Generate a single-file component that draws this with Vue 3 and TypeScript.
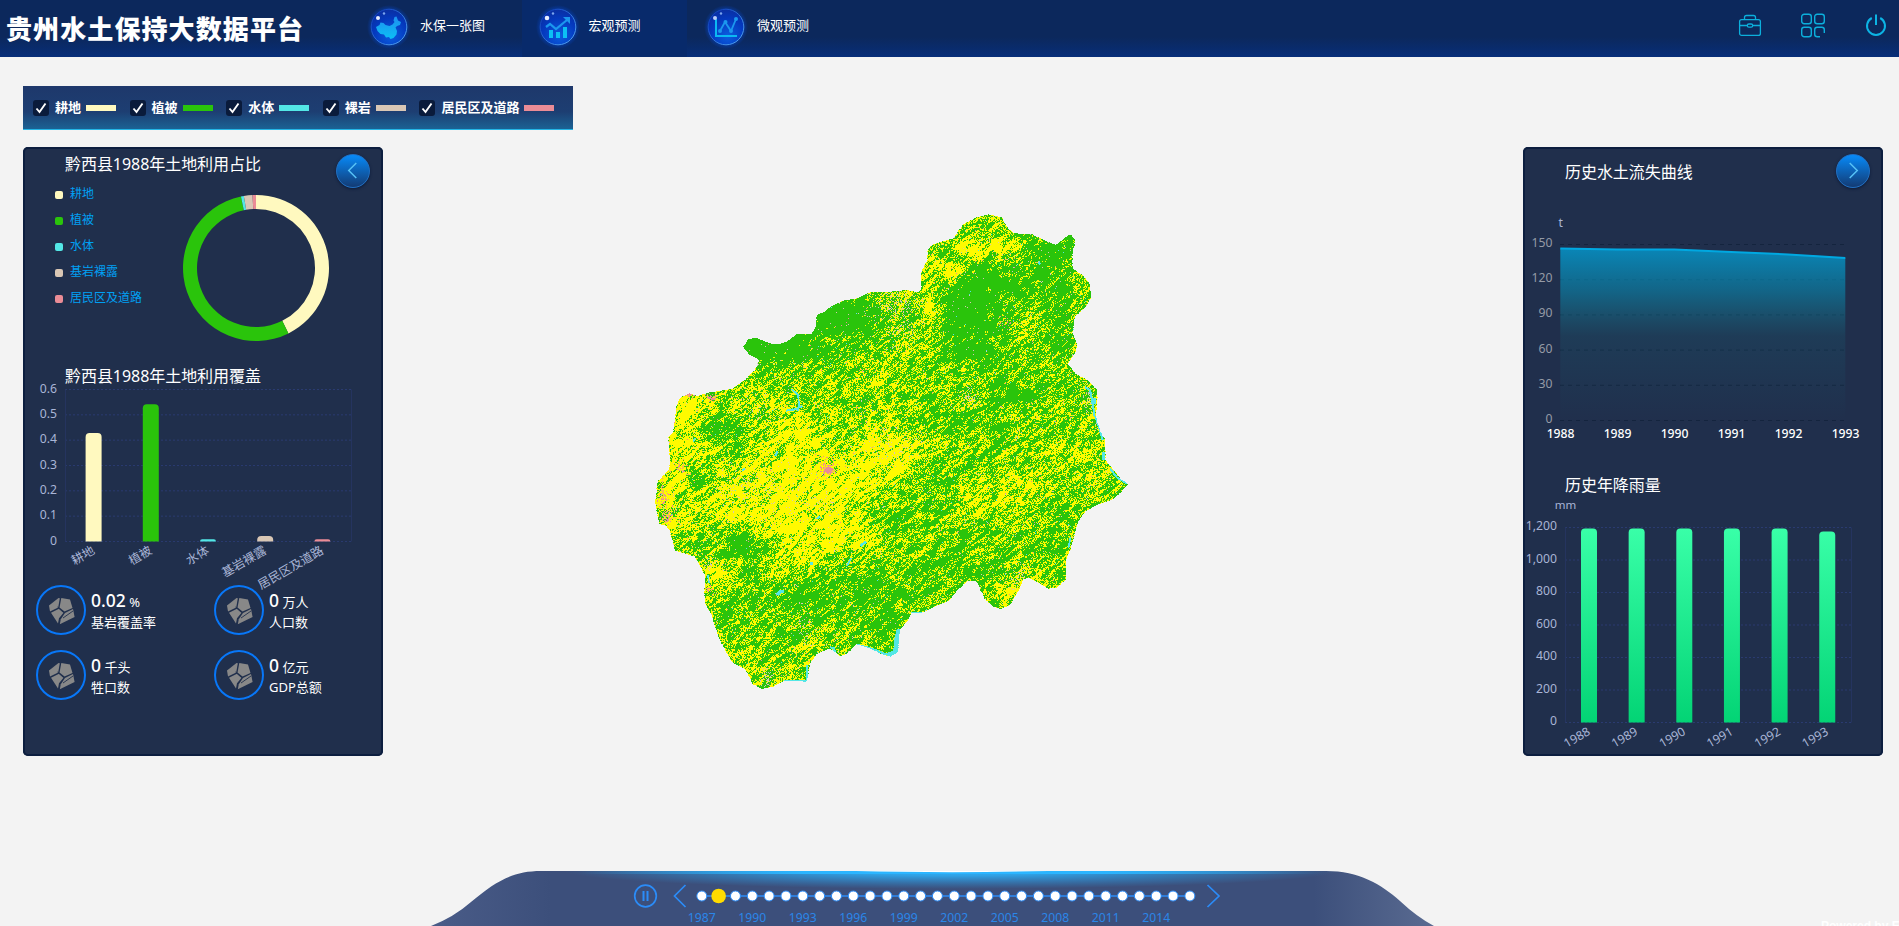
<script setup lang="ts">
import { onMounted, ref } from 'vue'

type Point = [number, number]
type Blob = [number, number, number, number, number]

const layers = [
  { name: '耕地', color: '#fff9bf' },
  { name: '植被', color: '#2ac40b' },
  { name: '水体', color: '#53e7e6' },
  { name: '裸岩', color: '#d9c7b5' },
  { name: '居民区及道路', color: '#ea8c96' }
]

const shares = [
  { name: '耕地', color: '#fff9bf', from: 0, to: 153.6, value: 0.428 },
  { name: '植被', color: '#2ac40b', from: 153.6, to: 348.1, value: 0.541 },
  { name: '水体', color: '#53e7e6', from: 348.1, to: 350.4, value: 0.008 },
  { name: '基岩裸露', color: '#d9c7b5', from: 350.4, to: 357.3, value: 0.022 },
  { name: '居民区及道路', color: '#ea8c96', from: 357.3, to: 360, value: 0.008 }
]

function arc(from: number, to: number): string {
  const p = (deg: number, r: number) => {
    const a = ((deg - 90) * Math.PI) / 180
    return `${(75 + r * Math.cos(a)).toFixed(2)} ${(75 + r * Math.sin(a)).toFixed(2)}`
  }
  const large = to - from > 180 ? 1 : 0
  return `M${p(from, 73)}A73 73 0 ${large} 1 ${p(to, 73)}L${p(to, 59)}A59 59 0 ${large} 0 ${p(from, 59)}Z`
}

function bar(cx: number, top: number, bottom: number): string {
  const r = Math.min(4, bottom - top)
  return `M${cx - 8} ${bottom}V${top + r}Q${cx - 8} ${top} ${cx - 8 + r} ${top}H${cx + 8 - r}Q${cx + 8} ${top} ${cx + 8} ${top + r}V${bottom}Z`
}

const coverBars = shares.map((s, i) => ({
  ...s,
  cx: 70.6 + i * 57.2,
  d: bar(70.6 + i * 57.2, Math.min(168.5 - s.value * 253.5, 166.3), 168.5)
}))
const coverTicks = [0.6, 0.5, 0.4, 0.3, 0.2, 0.1, 0]

const stats = [
  { value: '0.02', unit: '%', label: '基岩覆盖率' },
  { value: '0', unit: '万人', label: '人口数' },
  { value: '0', unit: '千头', label: '牲口数' },
  { value: '0', unit: '亿元', label: 'GDP总额' }
]

const lossTicks = [150, 120, 90, 60, 30, 0]
const lossYears = [1988, 1989, 1990, 1991, 1992, 1993]
const lossY = [28.5, 29.6, 29.6, 32, 34.4, 38]
const lossLine = lossY.map((y, i) => `${37.3 + i * 57},${y}`).join(' ')

const rainTicks = ['1,200', '1,000', '800', '600', '400', '200', '0']
const rainBars = lossYears.map((year, i) => ({
  year,
  cx: 66 + i * 47.65,
  d: bar(66 + i * 47.65, i === 5 ? 36.5 : 33.5, 227.5)
}))

const dots = Array.from({ length: 30 }, (_, i) => ({
  x: 270.8 + i * 16.83,
  year: 1987 + i,
  labelled: i % 3 === 0 && i < 28,
  active: i === 1
}))

const outline: Point[] = [
  [1045, 43], [1085, 52], [1105, 85], [1120, 100], [1175, 102], [1215, 122], [1248, 135], [1290, 102], [1307, 120],
  [1297, 160], [1298, 205], [1330, 228], [1348, 250], [1354, 290], [1340, 318], [1305, 350], [1298, 400], [1312, 435],
  [1305, 460], [1284, 492], [1305, 520], [1345, 542], [1373, 572], [1368, 650], [1380, 690], [1395, 720], [1397, 780],
  [1425, 815], [1440, 835], [1465, 852], [1445, 875], [1415, 900], [1370, 915], [1335, 935], [1315, 965], [1305, 1000],
  [1290, 1050], [1278, 1080], [1278, 1138], [1250, 1163], [1225, 1166], [1190, 1145], [1165, 1133], [1150, 1138],
  [1140, 1165], [1110, 1215], [1083, 1227], [1060, 1220], [1035, 1198], [1010, 1145], [985, 1142], [950, 1172],
  [930, 1200], [880, 1222], [845, 1238], [815, 1240], [800, 1265], [780, 1290], [773, 1358], [750, 1370], [725, 1362],
  [690, 1345], [650, 1333], [620, 1362], [600, 1368], [570, 1345], [530, 1362], [510, 1390], [500, 1445], [432, 1442],
  [400, 1460], [365, 1467], [338, 1452], [318, 1410], [275, 1385], [255, 1350], [235, 1310], [215, 1245], [195, 1210],
  [193, 1180], [195, 1125], [165, 1070], [105, 1052], [90, 995], [80, 978], [58, 972], [46, 910], [52, 845], [88, 808],
  [90, 770], [84, 712], [100, 695], [110, 615], [122, 592], [150, 580], [172, 588], [210, 577], [275, 567], [315, 540],
  [345, 510], [358, 480], [325, 462], [310, 440], [325, 418], [348, 413], [390, 430], [415, 433], [440, 425], [470, 403],
  [515, 403], [527, 380], [530, 345], [555, 335], [575, 318], [610, 302], [650, 295], [690, 277], [750, 275], [800, 270],
  [835, 277], [845, 265], [842, 220], [862, 180], [863, 150], [875, 135], [915, 122], [940, 115], [970, 72], [1010, 52]
]

// Farmland density: x, y, x radius, y radius, weight
const farmland: Blob[] = [
  [440, 850, 210, 130, 0.3], [620, 860, 130, 90, 0.2], [750, 760, 90, 75, 0.34], [130, 720, 55, 130, 0.3],
  [90, 900, 60, 110, 0.25], [560, 1010, 200, 55, 0.22], [340, 940, 130, 60, 0.2], [470, 690, 120, 60, 0.18],
  [940, 215, 38, 30, 0.5], [1000, 150, 60, 28, 0.4], [868, 320, 26, 60, 0.4], [1080, 130, 50, 40, 0.2],
  [1110, 890, 100, 70, 0.18], [775, 300, 50, 35, 0.2], [780, 460, 110, 80, 0.06], [220, 1110, 60, 35, 0.26],
  [1150, 450, 50, 70, 0.18], [150, 620, 35, 40, 0.35], [1110, 1180, 45, 40, 0.26], [350, 600, 90, 50, 0.12],
  [1320, 790, 70, 100, 0.1], [420, 1080, 80, 50, 0.18], [890, 180, 40, 60, 0.12], [1000, 890, 70, 60, 0.1],
  [970, 310, 90, 100, -0.42], [1080, 240, 110, 60, -0.28], [1250, 190, 60, 100, -0.36], [1260, 400, 50, 70, -0.26],
  [580, 350, 120, 60, -0.5], [430, 450, 150, 48, -0.42], [350, 430, 60, 35, -0.45], [1040, 440, 110, 80, -0.2],
  [1130, 580, 100, 35, -0.28], [310, 1035, 85, 40, -0.42], [470, 1190, 80, 45, -0.26], [700, 1170, 140, 50, -0.2],
  [880, 1085, 120, 50, -0.13], [860, 840, 70, 60, -0.14], [230, 680, 80, 35, -0.22], [770, 960, 80, 60, -0.2],
  [1000, 680, 110, 60, -0.12], [740, 1270, 50, 40, -0.2], [160, 830, 28, 28, -0.45], [1000, 1000, 90, 60, -0.1],
  [290, 750, 25, 60, -0.26], [1010, 1110, 40, 40, -0.2], [930, 155, 30, 20, -0.4], [120, 890, 20, 30, -0.3],
  [1200, 1000, 120, 90, -0.04], [520, 1230, 140, 70, -0.08], [690, 330, 70, 35, -0.15], [310, 1110, 60, 25, -0.2]
]
const bareRock: Blob[] = [
  [770, 310, 50, 40, 0.22], [780, 400, 50, 30, 0.12], [330, 850, 80, 50, 0.09], [520, 910, 60, 40, 0.06],
  [990, 590, 20, 22, 0.3], [210, 1090, 18, 14, 0.3], [380, 1430, 18, 26, 0.3], [1340, 600, 25, 30, 0.18],
  [490, 1290, 18, 50, 0.12], [740, 740, 90, 60, 0.05], [1140, 1140, 35, 40, 0.12], [350, 630, 60, 30, 0.1]
]
const builtUp: Blob[] = [
  [565, 810, 14, 12, 1.4], [550, 800, 28, 25, 0.18], [70, 890, 14, 35, 0.35], [80, 950, 20, 16, 0.5],
  [120, 805, 25, 18, 0.2], [215, 592, 14, 8, 0.8], [148, 582, 12, 6, 1], [1095, 365, 22, 14, 0.2], [205, 1170, 12, 10, 0.4]
]
const rivers: { width: number; points: Point[] }[] = [
  { width: 6, points: [[1335, 562], [1350, 570], [1356, 600], [1364, 650]] },
  { width: 16, points: [[1360, 595], [1361, 612]] },
  { width: 6, points: [[1366, 650], [1380, 690], [1388, 720]] },
  { width: 9, points: [[1389, 755], [1391, 780]] },
  { width: 6, points: [[1410, 805], [1430, 832], [1460, 850]] },
  { width: 9, points: [[850, 1240], [812, 1241]] },
  { width: 15, points: [[778, 1288], [770, 1320], [767, 1358], [742, 1366]] },
  { width: 7, points: [[740, 1364], [700, 1348], [650, 1334]] },
  { width: 6, points: [[500, 1395], [500, 1443], [432, 1443]] },
  { width: 5, points: [[455, 567], [474, 585], [478, 622]] },
  { width: 6, points: [[438, 632], [465, 628], [488, 618]] },
  { width: 10, points: [[470, 628], [476, 628]] },
  { width: 11, points: [[412, 1186], [420, 1175], [432, 1174]] },
  { width: 8, points: [[662, 1038], [678, 1024]] },
  { width: 5, points: [[620, 1098], [634, 1074]] },
  { width: 8, points: [[511, 1090], [519, 1090]] },
  { width: 6, points: [[1196, 185], [1200, 194]] },
  { width: 6, points: [[529, 957], [540, 950]] },
  { width: 6, points: [[308, 812], [314, 804]] },
  { width: 6, points: [[406, 768], [413, 754]] },
  { width: 5, points: [[160, 725], [165, 714]] },
  { width: 5, points: [[204, 1125], [207, 1150]] },
  { width: 5, points: [[1292, 1010], [1285, 1045]] },
  { width: 6, points: [[570, 1342], [582, 1345], [585, 1358]] }
]

function hash(x: number, y: number, seed: number): number {
  let h = Math.imul(x, 374761393) ^ Math.imul(y, 668265263) ^ Math.imul(seed, 1274126177)
  h = Math.imul(h ^ (h >>> 13), 1274126177)
  h = Math.imul(h ^ (h >>> 16), 2246822519)
  return ((h ^ (h >>> 15)) >>> 0) / 4294967296
}

function valueNoise(x: number, y: number, seed: number): number {
  const x0 = Math.floor(x)
  const y0 = Math.floor(y)
  const fx = x - x0
  const fy = y - y0
  const sx = fx * fx * (3 - 2 * fx)
  const sy = fy * fy * (3 - 2 * fy)
  const top = hash(x0, y0, seed) * (1 - sx) + hash(x0 + 1, y0, seed) * sx
  const low = hash(x0, y0 + 1, seed) * (1 - sx) + hash(x0 + 1, y0 + 1, seed) * sx
  return top * (1 - sy) + low * sy
}

function field(blobs: Blob[], x: number, y: number): number {
  let sum = 0
  for (const [cx, cy, rx, ry, w] of blobs) {
    const d = ((x - cx) / rx) ** 2 + ((y - cy) / ry) ** 2
    if (d < 7) sum += w * Math.exp(-d)
  }
  return sum
}

const mapCanvas = ref<HTMLCanvasElement | null>(null)

onMounted(() => {
  const ctx = mapCanvas.value?.getContext('2d')
  if (!ctx) return
  const region = new Path2D()
  outline.forEach(([x, y], i) => (i ? region.lineTo(x / 3, y / 3) : region.moveTo(x / 3, y / 3)))
  region.closePath()
  const river = rivers.map(({ width, points }) => {
    const path = new Path2D()
    points.forEach(([x, y], i) => (i ? path.lineTo(x / 3, y / 3) : path.moveTo(x / 3, y / 3)))
    return { width: width / 3, path }
  })
  for (let py = 10; py < 492; py++) {
    for (let px = 12; px < 492; px++) {
      const jx = px + 0.5 + (hash(px, py, 7) - 0.5) * 0.8
      if (!ctx.isPointInPath(region, jx, py + 0.5)) continue
      const x = px * 3
      const y = py * 3
      const along = px * 0.77 - py * 0.64
      const across = px * 0.64 + py * 0.77
      const density =
        0.432 +
        field(farmland, x, y) +
        (valueNoise(along / 7, across / 2, 1) - 0.5) * 0.66 +
        (valueNoise(along / 20, across / 6, 2) - 0.5) * 0.18 +
        (hash(px, py, 3) - 0.5) * 0.58
      let color = density > 0.5 ? '#fffa00' : '#2ac40b'
      if (hash(px, py, 4) < 0.01 + field(bareRock, x, y)) color = '#d9c7b5'
      if (hash(px, py, 5) < 0.002 + field(builtUp, x, y)) color = '#ea8c96'
      if (hash(px, py, 6) < 0.0015) color = '#53e7e6'
      for (const r of river) {
        ctx.lineWidth = r.width
        if (ctx.isPointInStroke(r.path, px + 0.5, py + 0.5)) color = '#53e7e6'
      }
      ctx.fillStyle = color
      ctx.fillRect(px, py, 1, 1)
    }
  }
})
</script>

<template>
  <div class="page">
    <header class="topbar">
      <h1 class="brand">贵州水土保持大数据平台</h1>
      <nav class="nav">
        <a class="nav-item">
          <svg class="orb" viewBox="0 0 44 44">
            <defs>
              <radialGradient id="orb" cx=".55" cy=".75" r=".75">
                <stop offset="0" stop-color="#0b5ddf" /><stop offset=".65" stop-color="#0438bd" /><stop offset="1" stop-color="#0a2fa2" />
              </radialGradient>
              <radialGradient id="halo"><stop offset=".72" stop-color="#0644c4" stop-opacity=".7" /><stop offset="1" stop-color="#0644c4" stop-opacity="0" /></radialGradient>
              <linearGradient id="rim" x2="1" y2="1"><stop offset=".1" stop-color="#0d3cba" /><stop offset="1" stop-color="#58aff8" /></linearGradient>
              <linearGradient id="land" x2="0" y2="1"><stop offset="0" stop-color="#1e8ff0" /><stop offset="1" stop-color="#0cc0f4" /></linearGradient>
            </defs>
            <circle cx="22" cy="22" r="22" fill="url(#halo)" /><circle cx="22" cy="22" r="17.8" fill="url(#orb)" stroke="url(#rim)" />
            <path d="M9 22l3.500-2 1-2.500 3 .5 2 2 4 1 3-1.500 2-2.500-1-1.500 1-3.500 2-.5 1.500 4 3 1.500-1 3-3 1-1.500 1.500 1.500 3.500-.5 3.500-3 3.500-3 1-1.500-2-3 .5-2-3-3.500-.5-3-3z" fill="url(#land)" />
            <circle cx="11" cy="13" r="2" fill="#e6eeff" /><circle cx="17" cy="8.500" r="1.200" fill="#7da5ef" />
          </svg>
          <span>水保一张图</span>
        </a>
        <a class="nav-item active">
          <svg class="orb" viewBox="0 0 44 44">
            <circle cx="22" cy="22" r="22" fill="url(#halo)" /><circle cx="22" cy="22" r="17.8" fill="url(#orb)" stroke="url(#rim)" />
            <path d="M13 25h4v8h-4zM20 27h4v6h-4zM27 22h4v11h-4z" fill="#0cc0f4" />
            <path d="M10 22l4-3 6 5 11-9" fill="none" stroke="#1c97ee" stroke-width="2.200" /><path d="M27 12h7v7z" fill="#1c97ee" />
            <circle cx="11" cy="13" r="2.300" fill="#e6eeff" /><circle cx="17" cy="8.500" r="1.200" fill="#7da5ef" />
          </svg>
          <span>宏观预测</span>
        </a>
        <a class="nav-item">
          <svg class="orb" viewBox="0 0 44 44">
            <circle cx="22" cy="22" r="22" fill="url(#halo)" /><circle cx="22" cy="22" r="17.8" fill="url(#orb)" stroke="url(#rim)" />
            <path d="M12 14v17h21" fill="none" stroke="#0cb8f2" stroke-width="2" />
            <path d="M16 26l5-9 6 9 5-12" fill="none" stroke="#1c97ee" stroke-width="1.800" />
            <g fill="#1c97ee"><circle cx="16" cy="26" r="2" /><circle cx="21.500" cy="17" r="2" /><circle cx="27" cy="26" r="2" /><circle cx="32" cy="14" r="2" /></g>
            <circle cx="11" cy="13" r="2" fill="#b9cdf8" /><circle cx="17" cy="8.500" r="1.200" fill="#7da5ef" />
          </svg>
          <span>微观预测</span>
        </a>
      </nav>
      <div class="tools">
        <svg width="24" height="24" viewBox="0 0 24 24" fill="none" stroke="#0cafdc" stroke-width="1.300">
          <rect x="1.600" y="6.600" width="20.800" height="15.800" rx="2" /><path d="M6.500 6.500V4.500Q6.500 2.500 8.500 2.500h7Q17.500 2.500 17.500 4.500v2M2 12.500h7.500M14.500 12.500H22" />
          <rect x="9.300" y="11" width="5.400" height="3.200" rx="1.600" />
        </svg>
        <svg width="26" height="26" viewBox="0 0 26 26" fill="none" stroke="#0cafdc" stroke-width="1.400">
          <rect x="1.700" y="1.200" width="9.600" height="9.600" rx="2.500" /><rect x="14.700" y="1.200" width="9.600" height="9.600" rx="2.500" />
          <rect x="1.700" y="14.200" width="9.600" height="9.600" rx="2.500" /><path d="M24.300 20v-3.300q0-2.500-2.500-2.500h-4.600q-2.500 0-2.500 2.500v4.600q0 2.500 2.500 2.500H20" />
        </svg>
        <svg width="24" height="24" viewBox="0 0 24 24" fill="none" stroke="#0cb4e4" stroke-width="2">
          <path d="M7.800 5A9 9 0 1 0 16.200 5M12 1.500v10.500" />
        </svg>
      </div>
    </header>

    <div class="layer-bar">
      <label v-for="layer in layers" :key="layer.name" class="layer">
        <span class="check"><svg viewBox="0 0 16 16"><path d="M3.500 8.500L6.500 12 12.500 3.500" fill="none" stroke="#fff" stroke-width="1.900" /></svg></span>
        <b>{{ layer.name }}</b>
        <i class="swatch" :style="{ background: layer.color }"></i>
      </label>
    </div>

    <main class="content">
      <section class="panel">
        <button class="toggle"><svg viewBox="0 0 34 34"><path d="M20.500 8.500L12.500 16.500 20.500 24.500" /></svg></button>
        <h2 class="title share-title">黔西县1988年土地利用占比</h2>
        <div class="share">
          <ul class="share-legend">
            <li v-for="s in shares" :key="s.name"><i :style="{ background: s.color }"></i>{{ s.name }}</li>
          </ul>
          <svg class="donut" viewBox="0 0 150 150">
            <path v-for="s in shares" :key="s.name" :d="arc(s.from, s.to)" :fill="s.color" />
          </svg>
        </div>
        <h2 class="title cover-title">黔西县1988年土地利用覆盖</h2>
        <svg class="chart cover-chart" viewBox="0 4 360 222">
          <g class="grid-lines">
            <line v-for="(t, i) in coverTicks" :key="t" x1="42" x2="328" :y1="16.500 + i * 25.330" :y2="16.500 + i * 25.330" />
            <path d="M42.500 16.500V168.500M328.500 16.500V168.500" class="frame" />
          </g>
          <text v-for="(t, i) in coverTicks" :key="'t' + t" class="tick" x="34" :y="19.700 + i * 25.330">{{ t }}</text>
          <path v-for="b in coverBars" :key="b.name" :d="b.d" :fill="b.color" />
          <text v-for="b in coverBars" :key="'n' + b.name" class="tick" :transform="`translate(${b.cx + 2} 180) rotate(-30)`">{{ b.name }}</text>
        </svg>
        <div class="stats">
          <div v-for="s in stats" :key="s.label" class="stat">
            <svg class="stone" viewBox="0 0 50 50">
              <circle cx="25" cy="25" r="24" fill="none" stroke="#0877f8" stroke-width="2" />
              <g fill="#888">
                <path d="M13 20.500l9.500-7.500 1.300.3-1.600 9.200-8.200 4z" />
                <path d="M25.300 13l8.700 1.500 2.500 8.500-8 3.500-5-4z" />
                <path d="M15 27.800l8-4 4.500 4-4.500 5.500L22 38.500z" />
                <path d="M29 28l8-4 1.600 8-14.800 7.300 1-5z" />
              </g>
              <path d="M21.500 22l6 5.500M27 33l10-7" fill="none" stroke="#202f4c" stroke-width=".9" />
            </svg>
            <div class="stat-text">
              <p><strong>{{ s.value }}</strong> {{ s.unit }}</p>
              <p>{{ s.label }}</p>
            </div>
          </div>
        </div>
      </section>

      <canvas ref="mapCanvas" class="map" width="500" height="500"></canvas>

      <section class="panel">
        <button class="toggle"><svg viewBox="0 0 34 34"><path d="M13.500 8.500L21.500 16.500 13.500 24.500" /></svg></button>
        <h2 class="title loss-title">历史水土流失曲线</h2>
        <svg class="chart loss-chart" viewBox="0 -15 360 245">
          <defs>
            <linearGradient id="loss" x2="0" y2="1">
              <stop offset="0" stop-color="#00a8e1" stop-opacity=".72" /><stop offset=".25" stop-color="#04a0c8" stop-opacity=".47" />
              <stop offset=".51" stop-color="#1299a8" stop-opacity=".12" /><stop offset="1" stop-color="#1299a8" stop-opacity="0" />
            </linearGradient>
          </defs>
          <text class="tick" x="39.800" y="6.500">t</text>
          <line v-for="(t, i) in lossTicks" :key="t" class="dash" x1="37" x2="322" :y1="24.500 + i * 35.200" :y2="24.500 + i * 35.200" />
          <polygon :points="`37.3,200.5 ${lossLine} 322.3,200.5`" fill="url(#loss)" />
          <polyline :points="lossLine" fill="none" stroke="#00a8e1" stroke-width="2" />
          <text v-for="(t, i) in lossTicks" :key="'t' + t" class="tick gray" x="29.500" :y="27 + i * 35.200">{{ t }}</text>
          <text v-for="(y, i) in lossYears" :key="y" class="tick year" :x="37.600 + i * 57" y="217.500">{{ y }}</text>
        </svg>
        <h2 class="title rain-title">历史年降雨量</h2>
        <svg class="chart rain-chart" viewBox="0 0 360 260">
          <defs>
            <linearGradient id="rain" gradientUnits="userSpaceOnUse" x1="0" y1="33" x2="0" y2="227">
              <stop offset="0" stop-color="#39ffa8" /><stop offset="1" stop-color="#03d475" />
            </linearGradient>
          </defs>
          <text class="tick unit" x="42.500" y="14">mm</text>
          <g class="grid-lines">
            <line v-for="(t, i) in rainTicks" :key="t" x1="42" x2="328" :y1="32.500 + i * 32.500" :y2="32.500 + i * 32.500" />
            <path d="M42.500 32.500V227.500M328.500 32.500V227.500" class="frame" />
          </g>
          <text v-for="(t, i) in rainTicks" :key="'t' + t" class="tick" x="34" :y="35 + i * 32.500">{{ t }}</text>
          <path v-for="b in rainBars" :key="b.year" :d="b.d" fill="url(#rain)" />
          <text v-for="b in rainBars" :key="'n' + b.year" class="tick" :transform="`translate(${b.cx + 2} 239) rotate(-30)`">{{ b.year }}</text>
        </svg>
      </section>
    </main>

    <footer class="timeline">
      <svg class="track" width="1003" height="56" viewBox="0 0 1003 56">
        <defs>
          <linearGradient id="dock"><stop offset="0" stop-color="#4a5c88" /><stop offset=".12" stop-color="#3c4f7b" /><stop offset=".88" stop-color="#3c4f7b" /><stop offset="1" stop-color="#5a6b91" /></linearGradient>
          <radialGradient id="glow"><stop offset="0" stop-color="#2db6ff" /><stop offset=".3" stop-color="#2db0f8" stop-opacity=".85" /><stop offset="1" stop-color="#2c9fe8" stop-opacity="0" /></radialGradient>
          <linearGradient id="edge"><stop offset="0" stop-color="#2bb1fb" stop-opacity="0" /><stop offset=".3" stop-color="#2bb5ff" /><stop offset=".7" stop-color="#2bb5ff" /><stop offset="1" stop-color="#2bb1fb" stop-opacity="0" /></linearGradient>
          <clipPath id="dock-shape"><path d="M0 56Q23 47 40 32C65 11 82 1 110 1H895C928 1 950 14 969 31Q986 47 1003 56Z" /></clipPath>
        </defs>
        <g clip-path="url(#dock-shape)">
          <rect width="1003" height="56" fill="url(#dock)" />
          <ellipse cx="521" cy="0" rx="390" ry="19" fill="url(#glow)" />
          <rect x="150" width="742" height="4" fill="url(#edge)" />
        </g>
        <path d="M425 1Q470 2 521 2.200 570 2 617 1Z" fill="#fff" />
        <g fill="none" stroke="#2b8cf8" stroke-width="1.700">
          <circle cx="214.500" cy="26" r="10.800" /><path d="M212.500 21v10M216.500 21v10" stroke-width="2" />
          <path d="M254.500 15L243.500 26 254.500 37M776.500 15L788 26 776.500 37M271 26H760" />
        </g>
        <circle v-for="d in dots" :key="d.year" :cx="d.x" cy="26" :r="d.active ? 7.300 : 5" :class="{ active: d.active }" class="dot" />
        <template v-for="d in dots" :key="'y' + d.year">
          <text v-if="d.labelled" :x="d.x" y="52">{{ d.year }}</text>
        </template>
      </svg>
      <span class="credit">Powered by Esri</span>
    </footer>
  </div>
</template>

<style>
html,
body {
  overflow: hidden;
  background: #f3f3f3;
}
</style>

<style scoped>
.page {
  display: flex;
  flex-direction: column;
  width: 100%;
  height: 926px;
  overflow: hidden;
  background: #f3f3f3;
  color: #fff;
  font: 13px/1.2 'Noto Sans', 'Noto Sans CJK SC', sans-serif;
}
.topbar {
  display: flex;
  flex: none;
  height: 57px;
  background: linear-gradient(#0c285c 0, #0c285c 65%, #072e79 100%);
}
.brand {
  width: 353px;
  margin: 0;
  padding-left: 6px;
  box-sizing: border-box;
  font: 900 26px/55px 'Noto Sans CJK SC', sans-serif;
  letter-spacing: 1.1px;
  white-space: nowrap;
}
.nav {
  display: flex;
  gap: 3.5px;
}
.nav-item {
  display: flex;
  width: 165px;
  height: 57px;
  padding: 0 0 4px 14px;
  box-sizing: border-box;
  align-items: center;
  gap: 9px;
  line-height: 18px;
}
.nav-item span {
  padding-bottom: 3px;
}
.nav-item.active {
  background: #082a6b;
}
.orb {
  width: 44px;
  height: 44px;
}
.tools {
  display: flex;
  align-items: flex-start;
  gap: 38px;
  margin-left: auto;
  padding: 13px 11px 0 0;
}
.layer-bar {
  display: flex;
  flex: none;
  width: 550px;
  height: 44px;
  margin: 29px 0 0 23px;
  padding-left: 10px;
  box-sizing: border-box;
  gap: 13.6px;
  align-items: center;
  border-bottom: 1px solid #25b5e6;
  background: linear-gradient(#1e386b 0, #1d3e72 60%, #1b6294 100%);
}
.layer {
  display: flex;
  align-items: center;
  white-space: nowrap;
}
.layer b {
  margin: 0 5px 0 6px;
}
.check {
  width: 16px;
  height: 16px;
  border-radius: 3px;
  background: #0a1b3b;
}
.check svg {
  display: block;
}
.swatch {
  width: 30px;
  height: 6px;
}
.content {
  display: grid;
  flex: none;
  grid-template-columns: 360px 1fr 360px;
  height: 609px;
  margin: 17px 16px 0 23px;
}
.panel {
  position: relative;
  display: flex;
  flex-direction: column;
  height: 609px;
  overflow: hidden;
  border-radius: 5px;
  background: #202f4c;
  box-shadow: inset 0 0 0 2px #0c1e3f;
}
.toggle {
  position: absolute;
  top: 7px;
  right: 13px;
  width: 34px;
  height: 34px;
  padding: 0;
  border: 1px solid #2070c4;
  border-radius: 50%;
  background: linear-gradient(#078af8, #133b74);
  box-shadow: 0 1px 3px #0a1b3b;
}
.toggle svg {
  display: block;
}
.toggle path {
  fill: none;
  stroke: #55c0f5;
  stroke-width: 1.6;
}
.title {
  flex: none;
  margin: 0 0 0 42px;
  font-size: 16px;
  font-weight: 400;
  line-height: 24px;
  letter-spacing: -0.05px;
}
.share-title {
  margin-top: 5px;
}
.share {
  display: flex;
  height: 188px;
}
.share-legend {
  width: 126px;
  margin: 5px 0 0;
  padding: 0 0 0 32px;
  list-style: none;
  color: #00a0f4;
  font-size: 12px;
}
.share-legend li {
  display: flex;
  height: 26px;
  align-items: center;
  gap: 7px;
}
.share-legend i {
  width: 8px;
  height: 8px;
  margin-top: 2px;
  border-radius: 2px;
}
.donut {
  width: 150px;
  height: 150px;
  margin-top: 17px;
}
.cover-title {
  position: relative;
}
.chart {
  display: block;
  flex: none;
  width: 360px;
}
.cover-chart {
  height: 222px;
  margin-top: -11px;
  margin-bottom: -14px;
}
.grid-lines line {
  stroke: #2a3b70;
  stroke-dasharray: 2 2;
}
.frame {
  fill: none;
  stroke: #25345f;
}
.tick {
  fill: #a9b5d6;
  font-size: 12.2px;
  text-anchor: end;
}
.tick.gray {
  fill: #959ba6;
}
.tick.year {
  fill: #fff;
  font-weight: 500;
  text-anchor: middle;
}
.tick.unit {
  font-size: 11.5px;
  text-anchor: middle;
}
.dash {
  stroke: #14243e;
  stroke-dasharray: 4 4;
}
.stats {
  display: grid;
  grid-template-columns: 178px 178px;
  grid-auto-rows: 65px;
  margin-left: 13px;
}
.stat {
  display: flex;
  gap: 5px;
}
.stone {
  width: 50px;
  height: 50px;
}
.stat-text p {
  margin: 0;
  line-height: 20px;
}
.stat-text p:first-child {
  margin-top: 5px;
}
.stat strong {
  font-size: 17.5px;
  font-weight: 500;
  line-height: 20px;
}
.map {
  margin: 53px 0 0 257px;
}
.loss-title {
  margin-top: 13px;
}
.loss-chart {
  height: 245px;
  margin-top: 21px;
}
.rain-title {
  margin-top: 23px;
}
.rain-chart {
  height: 260px;
  margin-top: -2px;
}
.timeline {
  display: flex;
  height: 56px;
  margin-top: 114px;
}
.track {
  flex: none;
  margin-left: 431px;
}
.track text {
  fill: #2b86e8;
  font-size: 12.2px;
  text-anchor: middle;
}
.dot {
  fill: #fff;
  stroke: #2b8cf8;
}
.dot.active {
  fill: #ffdc00;
  stroke: none;
}
.credit {
  margin: 49px 0 0 387px;
  white-space: nowrap;
  font: bold 12px/14px 'Liberation Sans', sans-serif;
}
</style>
